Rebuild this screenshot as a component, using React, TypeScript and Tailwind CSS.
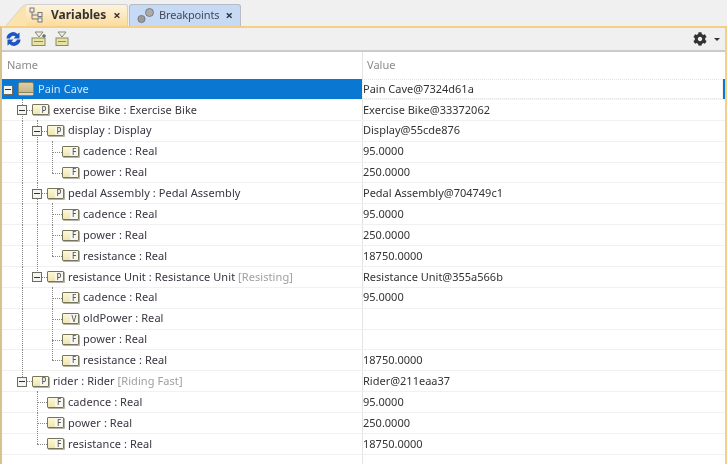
import React from 'react';
import { FaCog } from 'react-icons/fa';

interface Node {
  name: string;
  type?: string;
  tag?: string;
  value?: string;
  letter: string;
  children?: Node[];
}

interface FlatRow {
  node: Node;
  depth: number;
  isLast: boolean;
  // x positions of the ancestor lines that keep going through this row
  through: number[];
}

const leaf = (name: string, value?: string, letter = 'F'): Node => ({ name, type: 'Real', value, letter });

const tree: Node = {
  name: 'Pain Cave',
  value: 'Pain Cave@7324d61a',
  letter: '',
  children: [
    {
      name: 'exercise Bike',
      type: 'Exercise Bike',
      value: 'Exercise Bike@33372062',
      letter: 'P',
      children: [
        {
          name: 'display',
          type: 'Display',
          value: 'Display@55cde876',
          letter: 'P',
          children: [leaf('cadence', '95.0000'), leaf('power', '250.0000')],
        },
        {
          name: 'pedal Assembly',
          type: 'Pedal Assembly',
          value: 'Pedal Assembly@704749c1',
          letter: 'P',
          children: [leaf('cadence', '95.0000'), leaf('power', '250.0000'), leaf('resistance', '18750.0000')],
        },
        {
          name: 'resistance Unit',
          type: 'Resistance Unit',
          tag: '[Resisting]',
          value: 'Resistance Unit@355a566b',
          letter: 'P',
          children: [
            leaf('cadence', '95.0000'),
            leaf('oldPower', undefined, 'V'),
            leaf('power'),
            leaf('resistance', '18750.0000'),
          ],
        },
      ],
    },
    {
      name: 'rider',
      type: 'Rider',
      tag: '[Riding Fast]',
      value: 'Rider@211eaa37',
      letter: 'P',
      children: [leaf('cadence', '95.0000'), leaf('power', '250.0000'), leaf('resistance', '18750.0000')],
    },
  ],
};

// the panel has a 2px border, so these are 2px less than on the page
const lineX = (depth: number) => [6, 20, 35, 50][depth];

function flatten(node: Node, depth: number, isLast: boolean, through: number[], out: FlatRow[]) {
  out.push({ node, depth, isLast, through });
  const kids = node.children ?? [];
  const next = depth > 0 && !isLast ? [...through, lineX(depth)] : through;
  kids.forEach((k, i) => flatten(k, depth + 1, i === kids.length - 1, next, out));
  return out;
}

const rows = flatten(tree, 0, true, [], []);

const Expander = () => (
  <span className="absolute top-[5.5px] flex h-[10px] w-[10px] items-center justify-center border border-[#6b6b64] bg-[#f4f4f2]">
    <span className="h-px w-[6px] bg-[#333]" />
  </span>
);

const MemberIcon = ({ letter }: { letter: string }) => (
  <span className="flex h-[11px] w-[17px] shrink-0 justify-end rounded-[1px] border border-[#77745c] bg-gradient-to-b from-[#fdf8d8] to-[#efe6b0] shadow-[1px_1px_0_#b5b3a5]">
    <span className="flex w-[8px] items-center justify-center bg-[#f7f7f0] text-[8px] font-medium leading-none text-[#555]">
      {letter}
    </span>
  </span>
);

const RootIcon = () => (
  <span className="flex h-[14px] w-[16px] shrink-0 flex-col justify-end rounded-[2px] border border-[#8d8465] bg-gradient-to-b from-[#dccfa8] to-[#bfae82]">
    <span className="h-[3px] border-t border-[#8d8465] bg-[#e3d9ba]" />
  </span>
);

const Row = ({ row }: { row: FlatRow }) => {
  const { node, depth, isLast, through } = row;
  const selected = depth === 0;
  const branch = !!node.children;
  const x = lineX(depth);
  return (
    <div className={`flex h-[20.88px] shrink-0 border-b border-[#f1f1f1] ${selected ? 'bg-[#0a78d2]' : ''}`}>
      <div className="relative flex w-[360px] shrink-0 items-center" style={{ paddingLeft: depth === 0 ? 16 : x + 10 }}>
        {through.map((t) => (
          <span key={t} className="absolute -top-px -bottom-px border-l border-dotted border-[#888]" style={{ left: t }} />
        ))}
        {depth > 0 && (
          <>
            <span
              className={`absolute -top-px border-l border-dotted border-[#888] ${isLast ? 'h-[11px]' : '-bottom-px'}`}
              style={{ left: x }}
            />
            <span className="absolute top-[10px] w-[10px] border-t border-dotted border-[#888]" style={{ left: x }} />
          </>
        )}
        {branch && (
          <span className="absolute top-0" style={{ left: x - 5 }}>
            <Expander />
          </span>
        )}
        {depth === 0 ? <RootIcon /> : <MemberIcon letter={node.letter} />}
        <span
          className={`ml-[4px] whitespace-nowrap tracking-[0.07px] ${selected ? 'text-[#cfe6fb]' : 'text-[#3a3340]'}`}
        >
          {node.name}
          {node.type && ` : ${node.type}`}
          {node.tag && <span className="text-[#a0a0a0]"> {node.tag}</span>}
        </span>
      </div>
      <div
        className={`flex min-w-0 flex-1 items-center whitespace-nowrap border-l border-[#e4e4e4] text-[#333] ${
          selected ? 'border border-dotted border-[#555] bg-white' : ''
        }`}
      >
        {node.value}
      </div>
      {selected && <div className="w-[2px] bg-[#0a78d2]" />}
    </div>
  );
};

export default function App() {
  return (
    <div
      className="flex h-[464px] w-[727px] flex-col overflow-hidden bg-[#f0f0f0] text-[11px] text-[#333] blur-[0.35px]"
      style={{ fontFamily: '"Noto Sans", sans-serif' }}
    >
      {/* Tabs */}
      <div className="flex h-[26px] shrink-0 items-end pl-[5px]">
        <div className="flex h-[22.5px] items-stretch">
          <svg width="22" height="23" viewBox="0 0 22 23" className="-mr-px block">
            <path d="M0 23 L17 3 Q19 .7 22 .7 V23 Z" fill="#fbe3ae" stroke="#d9d2bf" />
          </svg>
          <div className="flex w-[102px] items-center rounded-tr-[3px] border-t border-r border-[#cfcfcf] bg-gradient-to-b from-[#fdf3dc] to-[#fbdc9c]">
            <svg width="16" height="16" viewBox="0 0 16 16" className="ml-[3px]">
              <path d="M3 5v7h6M3 8h6" stroke="#777" fill="none" />
              <rect x="1" y="1" width="4" height="4" fill="#eee" stroke="#777" />
              <rect x="9" y="5.5" width="4" height="4" fill="#eee" stroke="#777" />
              <rect x="9" y="11" width="4" height="4" fill="#eee" stroke="#777" />
            </svg>
            <span className="ml-[6px] text-[12px] font-bold text-[#333]">Variables</span>
            <span className="ml-[7px] text-[13px] font-bold leading-none text-[#333]">×</span>
          </div>
        </div>
        <div className="ml-px flex h-[22px] w-[112px] items-center rounded-t-[3px] border-x border-t border-[#b5bcc6] bg-[#c6daf5]">
          <svg width="18" height="18" viewBox="0 0 18 18" className="ml-[7px]">
            <circle cx="4.5" cy="12" r="3.6" fill="#9b9b9b" stroke="#666" strokeWidth=".7" />
            <circle cx="12.5" cy="5.500" r="4" fill="#aaa" stroke="#666" strokeWidth=".7" />
          </svg>
          <span className="ml-[4px] tracking-[-0.15px] text-[#43495a]">Breakpoints</span>
          <span className="ml-[6px] text-[13px] font-bold leading-none text-[#333]">×</span>
        </div>
      </div>

      {/* Panel */}
      <div className="flex min-h-0 flex-1 flex-col border-x-2 border-t-2 border-[#f6cf85] border-l-[#d9c08c]">
        <div className="flex h-[24px] shrink-0 items-center border-b-2 border-[#c9cbcd] bg-[#f0f0f0] pl-[3px] pr-[4px]">
          <svg width="17" height="18" viewBox="0 0 17 17">
            <path d="M1.500 8a6.500 6.500 0 0 1 11-4.500l2-1.500v6h-6l2-2A3.500 3.500 0 0 0 5 8z" fill="#1d55c4" />
            <path d="M15.500 9a6.500 6.500 0 0 1-11 4.500l-2 1.500V9h6l-2 2A3.500 3.500 0 0 0 12 9z" fill="#1d55c4" />
          </svg>
          <svg width="17" height="16" viewBox="0 0 17 16" className="ml-[9px]">
            <path d="M4 1h8l-4 5z" fill="#eee" stroke="#8a8a6a" />
            <path d="M13 3v4M11 5h4" stroke="#444" />
            <rect x="1" y="7" width="13" height="7.500" fill="#e8e3a0" stroke="#8a8a6a" />
            <path d="M3 10.500h9" stroke="#8a8a6a" />
          </svg>
          <svg width="15" height="16" viewBox="0 0 15 16" className="ml-[7px]">
            <path d="M3 1h8l-4 5z" fill="#eee" stroke="#8a8a6a" />
            <rect x="1" y="7" width="12" height="7.500" fill="#e8e3a0" stroke="#8a8a6a" />
            <path d="M3 10.500h8" stroke="#8a8a6a" />
          </svg>
          <div className="ml-auto flex items-center">
            <FaCog className="text-[14px] text-[#333]" />
            <span className="ml-[7px] mr-[1px] h-0 w-0 border-x-[3px] border-t-[3px] border-x-transparent border-t-[#333]" />
          </div>
        </div>

        <div className="flex min-h-0 flex-1 flex-col bg-white">
          <div className="flex h-[27px] shrink-0 text-[#8a8a8a]">
            <div className="flex w-[360px] shrink-0 items-center pl-[5px]">Name</div>
            <div className="flex flex-1 items-center border-l border-[#e4e4e4] pl-[4px]">Value</div>
          </div>
          {rows.map((r, i) => (
            <Row key={i} row={r} />
          ))}
          <div className="ml-[360px] flex-1 border-l border-[#e4e4e4]" />
        </div>
      </div>
    </div>
  );
}
